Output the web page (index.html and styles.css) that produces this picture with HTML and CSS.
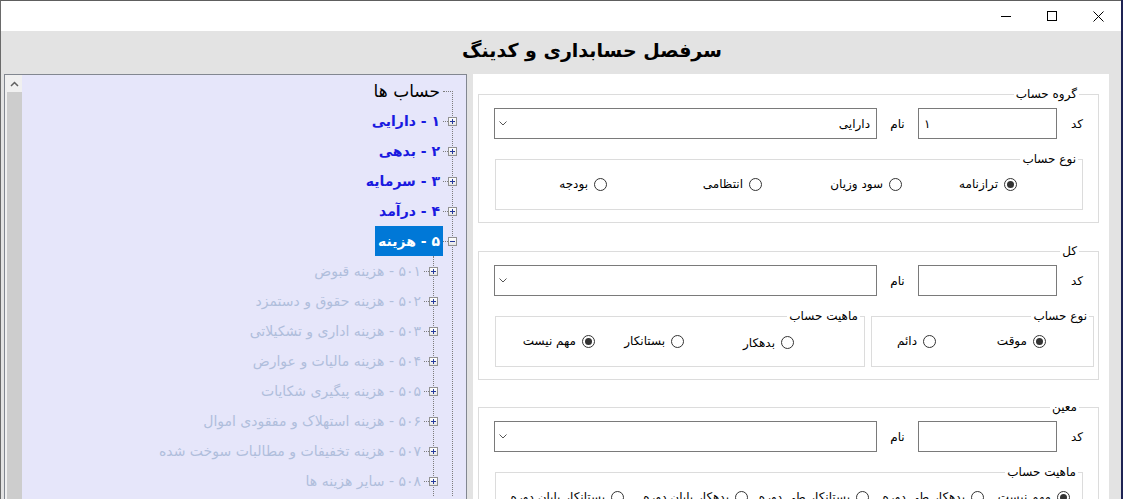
FILE: index.html
```html
<!DOCTYPE html>
<html lang="fa" dir="rtl">
<head>
  <meta charset="UTF-8">
  <meta name="viewport" content="width=device-width, initial-scale=1.0">
  <title>سرفصل حسابداری و کدینگ</title>
  <link rel="stylesheet" href="styles.css">
</head>
<body>
  <div class="window">
    <div class="titlebar">
      <div class="cap-btn">
        <svg width="10" height="10" viewBox="0 0 10 10"><path d="M0 5.5H10" stroke="#000" stroke-width="1"/></svg>
      </div>
      <div class="cap-btn">
        <svg width="10" height="10" viewBox="0 0 10 10"><rect x="0.5" y="0.5" width="9" height="9" fill="none" stroke="#000" stroke-width="1"/></svg>
      </div>
      <div class="cap-btn">
        <svg width="11" height="11" viewBox="0 0 11 11"><path d="M0.5 0.5L10.5 10.5M10.5 0.5L0.5 10.5" stroke="#000" stroke-width="1"/></svg>
      </div>
    </div>

    <div class="client">
      <h1>سرفصل حسابداری و کدینگ</h1>

      <div class="main">
        <!-- form side -->
        <div class="panel">
          <fieldset class="group">
            <legend>گروه حساب</legend>
            <div class="field-row">
              <label class="lbl-code">کد</label>
              <input type="text" class="code" value="۱" dir="ltr">
              <label class="lbl-name">نام</label>
              <div class="combo"><span>دارایی</span><svg width="8" height="5" viewBox="0 0 8 5"><path d="M0.5 0.5L4 4L7.5 0.5" fill="none" stroke="#555" stroke-width="1"/></svg></div>
            </div>
            <fieldset class="inner">
              <legend>نوع حساب</legend>
              <div class="opts opts-g1">
                <label class="radio"><input type="radio" name="g1" checked>ترازنامه</label>
                <label class="radio"><input type="radio" name="g1">سود وزیان</label>
                <label class="radio"><input type="radio" name="g1">انتظامی</label>
                <label class="radio"><input type="radio" name="g1">بودجه</label>
              </div>
            </fieldset>
          </fieldset>

          <fieldset class="group">
            <legend>کل</legend>
            <div class="field-row">
              <label class="lbl-code">کد</label>
              <input type="text" class="code" dir="ltr">
              <label class="lbl-name">نام</label>
              <div class="combo"><span></span><svg width="8" height="5" viewBox="0 0 8 5"><path d="M0.5 0.5L4 4L7.5 0.5" fill="none" stroke="#555" stroke-width="1"/></svg></div>
            </div>
            <div class="split">
              <fieldset class="inner inner-type">
                <legend>نوع حساب</legend>
                <div class="opts opts-k1">
                  <label class="radio"><input type="radio" name="k1" checked>موقت</label>
                  <label class="radio"><input type="radio" name="k1">دائم</label>
                </div>
              </fieldset>
              <fieldset class="inner inner-nature">
                <legend>ماهیت حساب</legend>
                <div class="opts opts-k2">
                  <label class="radio low"><input type="radio" name="k2">بدهکار</label>
                  <label class="radio"><input type="radio" name="k2">بستانکار</label>
                  <label class="radio"><input type="radio" name="k2" checked>مهم نیست</label>
                </div>
              </fieldset>
            </div>
          </fieldset>

          <fieldset class="group group-last">
            <legend>معین</legend>
            <div class="field-row">
              <label class="lbl-code">کد</label>
              <input type="text" class="code" dir="ltr">
              <label class="lbl-name">نام</label>
              <div class="combo"><span></span><svg width="8" height="5" viewBox="0 0 8 5"><path d="M0.5 0.5L4 4L7.5 0.5" fill="none" stroke="#555" stroke-width="1"/></svg></div>
            </div>
            <fieldset class="inner">
              <legend>ماهیت حساب</legend>
              <div class="opts opts-m1">
                <label class="radio"><input type="radio" name="m1" checked>مهم نیست</label>
                <label class="radio"><input type="radio" name="m1">بدهکار طی دوره</label>
                <label class="radio"><input type="radio" name="m1">بستانکار طی دوره</label>
                <label class="radio"><input type="radio" name="m1">بدهکار پایان دوره</label>
                <label class="radio"><input type="radio" name="m1">بستانکار پایان دوره</label>
              </div>
            </fieldset>
          </fieldset>
        </div>

        <!-- tree side -->
        <div class="tree">
          <div class="tree-body">
            <div class="node root"><span class="link"></span><span class="label">حساب ها</span></div>
            <ul class="branch level1">
              <li><div class="node"><span class="exp plus"></span><span class="link"></span><span class="label">۱ - دارایی</span></div></li>
              <li><div class="node"><span class="exp plus"></span><span class="link"></span><span class="label">۲ - بدهی</span></div></li>
              <li><div class="node"><span class="exp plus"></span><span class="link"></span><span class="label">۳ - سرمایه</span></div></li>
              <li><div class="node"><span class="exp plus"></span><span class="link"></span><span class="label">۴ - درآمد</span></div></li>
              <li>
                <div class="node"><span class="exp minus"></span><span class="link"></span><span class="label selected">۵ - هزینه</span></div>
                <ul class="branch level2">
                  <li><div class="node"><span class="exp plus"></span><span class="link"></span><span class="label">۵۰۱ - هزینه قبوض</span></div></li>
                  <li><div class="node"><span class="exp plus"></span><span class="link"></span><span class="label">۵۰۲ - هزینه حقوق و دستمزد</span></div></li>
                  <li><div class="node"><span class="exp plus"></span><span class="link"></span><span class="label">۵۰۳ - هزینه اداری و تشکیلاتی</span></div></li>
                  <li><div class="node"><span class="exp plus"></span><span class="link"></span><span class="label">۵۰۴ - هزینه مالیات و عوارض</span></div></li>
                  <li><div class="node"><span class="exp plus"></span><span class="link"></span><span class="label">۵۰۵ - هزینه پیگیری شکایات</span></div></li>
                  <li><div class="node"><span class="exp plus"></span><span class="link"></span><span class="label">۵۰۶ - هزینه استهلاک و مفقودی اموال</span></div></li>
                  <li><div class="node"><span class="exp plus"></span><span class="link"></span><span class="label">۵۰۷ - هزینه تخفیفات و مطالبات سوخت شده</span></div></li>
                  <li><div class="node"><span class="exp plus"></span><span class="link"></span><span class="label">۵۰۸ - سایر هزینه ها</span></div></li>
                </ul>
              </li>
            </ul>
          </div>
          <div class="scrollbar">
            <div class="sb-up">
              <svg width="9" height="6" viewBox="0 0 9 6"><path d="M1 5L4.5 1.5L8 5" fill="none" stroke="#606060" stroke-width="1.5"/></svg>
            </div>
            <div class="sb-thumb"></div>
          </div>
        </div>
      </div>
    </div>
  </div>
</body>
</html>
```

FILE: styles.css
```css
* {
  box-sizing: border-box;
}
html, body {
  margin: 0;
  padding: 0;
  height: 100%;
}
body {
  background: #1e2353;
  overflow: hidden;
  font-family: "DejaVu Sans", sans-serif;
  color: #000;
}
.window {
  width: 1121px;
  height: 499px;
  margin: 0 auto 0 0;
  border-top: 1px solid #5e5e5e;
  border-left: 1px solid #6a6a6a;
  background: #e3e3e3;
  display: flex;
  flex-direction: column;
  overflow: hidden;
}
.titlebar {
  height: 30px;
  flex-shrink: 0;
  background: #fff;
  display: flex;
  direction: ltr;
  justify-content: flex-end;
}
.cap-btn {
  width: 46px;
  height: 30px;
  display: flex;
  align-items: center;
  justify-content: center;
}
.client {
  flex: 1;
  display: flex;
  flex-direction: column;
  min-height: 0;
}
h1 {
  margin: 0;
  height: 43px;
  line-height: 38px;
  padding-left: 62px;
  text-align: center;
  font-size: 19px;
  font-weight: bold;
  flex-shrink: 0;
}
.main {
  flex: 1;
  min-height: 0;
  display: flex;
  gap: 6px;
  padding: 0 12px 0 3px;
}

/* form panel */
.panel {
  width: 636px;
  flex-shrink: 0;
  background: #fff;
  padding: 13px 10px 0 5px;
  font-size: 12px;
}
fieldset {
  margin: 0;
  border: 1px solid #dcdcdc;
  min-width: 0;
}
legend {
  font-size: 12px;
  line-height: 14px;
  padding: 0 2px;
  margin-right: 4px;
}
.group {
  padding: 7px 15px 12px 15px;
  margin-bottom: 21px;
}
.group + .group-last {
  margin-top: -1px;
}
.field-row {
  display: flex;
  height: 31px;
  align-items: center;
}
.lbl-code {
  width: 26px;
  flex-shrink: 0;
}
.code {
  width: 139px;
  height: 31px;
  flex-shrink: 0;
  border: 1px solid #7a7a7a;
  margin: 0;
  padding: 0 5px;
  font-family: "DejaVu Sans", sans-serif;
  font-size: 12px;
  text-align: left;
  outline: none;
}
.lbl-name {
  width: 41px;
  flex-shrink: 0;
  text-align: center;
}
.combo {
  flex: 1;
  height: 31px;
  border: 1px solid #7a7a7a;
  display: flex;
  align-items: center;
  justify-content: space-between;
  padding: 0 6px 0 4px;
}
.inner {
  margin: 13px 0 0 1px;
  padding: 8px 0 15px 0;
}
.split {
  display: flex;
  gap: 6px;
  margin: 13px -11px 0 1px;
}
.split .inner {
  margin: 0;
}
.inner-type {
  width: 223px;
}
.inner-nature {
  width: 370px;
}
.opts {
  display: grid;
  grid-auto-flow: column;
  justify-content: start;
  height: 20px;
  align-items: center;
}
.opts-g1 {
  padding-right: 65px;
  grid-template-columns: 115px 140px 155px auto;
}
.opts-k1 {
  padding-right: 47px;
  grid-template-columns: 110px auto;
}
.opts-k2 {
  padding-right: 70px;
  grid-template-columns: 110px 89px auto;
}
.opts-m1 {
  padding-right: 12px;
  grid-template-columns: 86px 115px 121px 124px auto;
}
.radio {
  display: flex;
  align-items: center;
  gap: 6px;
  white-space: nowrap;
}
.radio.low {
  margin-top: 3px;
}
.radio input {
  appearance: none;
  -webkit-appearance: none;
  margin: 0;
  width: 13px;
  height: 13px;
  border: 1px solid #333;
  border-radius: 50%;
  background: #fff;
  display: grid;
  place-content: center;
  flex-shrink: 0;
}
.radio input:checked::before {
  content: "";
  width: 7px;
  height: 7px;
  border-radius: 50%;
  background: #333;
}

/* tree view */
.tree {
  width: 463px;
  flex-shrink: 0;
  border: 1px solid #828790;
  border-bottom: none;
  display: flex;
  background: #e6e6fa;
}
.tree-body {
  flex: 1;
  padding-top: 1px;
  font-size: 14px;
}
.scrollbar {
  width: 17px;
  flex-shrink: 0;
  background: #f0f0f0;
  display: flex;
  flex-direction: column;
}
.sb-up {
  height: 17px;
  display: flex;
  align-items: center;
  justify-content: center;
  margin-left: 2px;
}
.sb-thumb {
  flex: 1;
  margin-left: 2px;
  background: #cdcdcd;
}
.branch {
  list-style: none;
  margin: 0;
  padding: 0;
  border-right: 1px dotted #7d7d7d;
}
.level1 {
  margin-right: 13px;
  margin-top: -15px;
  padding-top: 15px;
}
.level2 {
  margin-right: 18px;
}
.node {
  display: flex;
  align-items: center;
  height: 30px;
}
.root {
  padding-right: 13px;
}
.root .link {
  width: 10px;
}
.root .label {
  font-size: 17px;
}
.exp {
  position: relative;
  width: 9px;
  height: 9px;
  margin-right: -5px;
  border: 1px solid #919191;
  background: linear-gradient(#fff, #e6e6e6);
  flex-shrink: 0;
}
.exp::before {
  content: "";
  position: absolute;
  left: 1px;
  top: 3px;
  width: 5px;
  height: 1px;
  background: #25399a;
}
.exp.plus::after {
  content: "";
  position: absolute;
  left: 3px;
  top: 1px;
  width: 1px;
  height: 5px;
  background: #25399a;
}
.link {
  width: 5px;
  height: 0;
  border-top: 1px dotted #7d7d7d;
  flex-shrink: 0;
}
.label {
  height: 30px;
  line-height: 30px;
  padding: 0 3px;
  white-space: nowrap;
}
.level1 > li > .node .label {
  color: #1a1ae0;
  font-weight: bold;
}
.level1 > li > .node .label.selected {
  background: #0078d7;
  color: #fff;
}
.level2 .label {
  color: #b0bedc;
  font-weight: normal;
}
```
